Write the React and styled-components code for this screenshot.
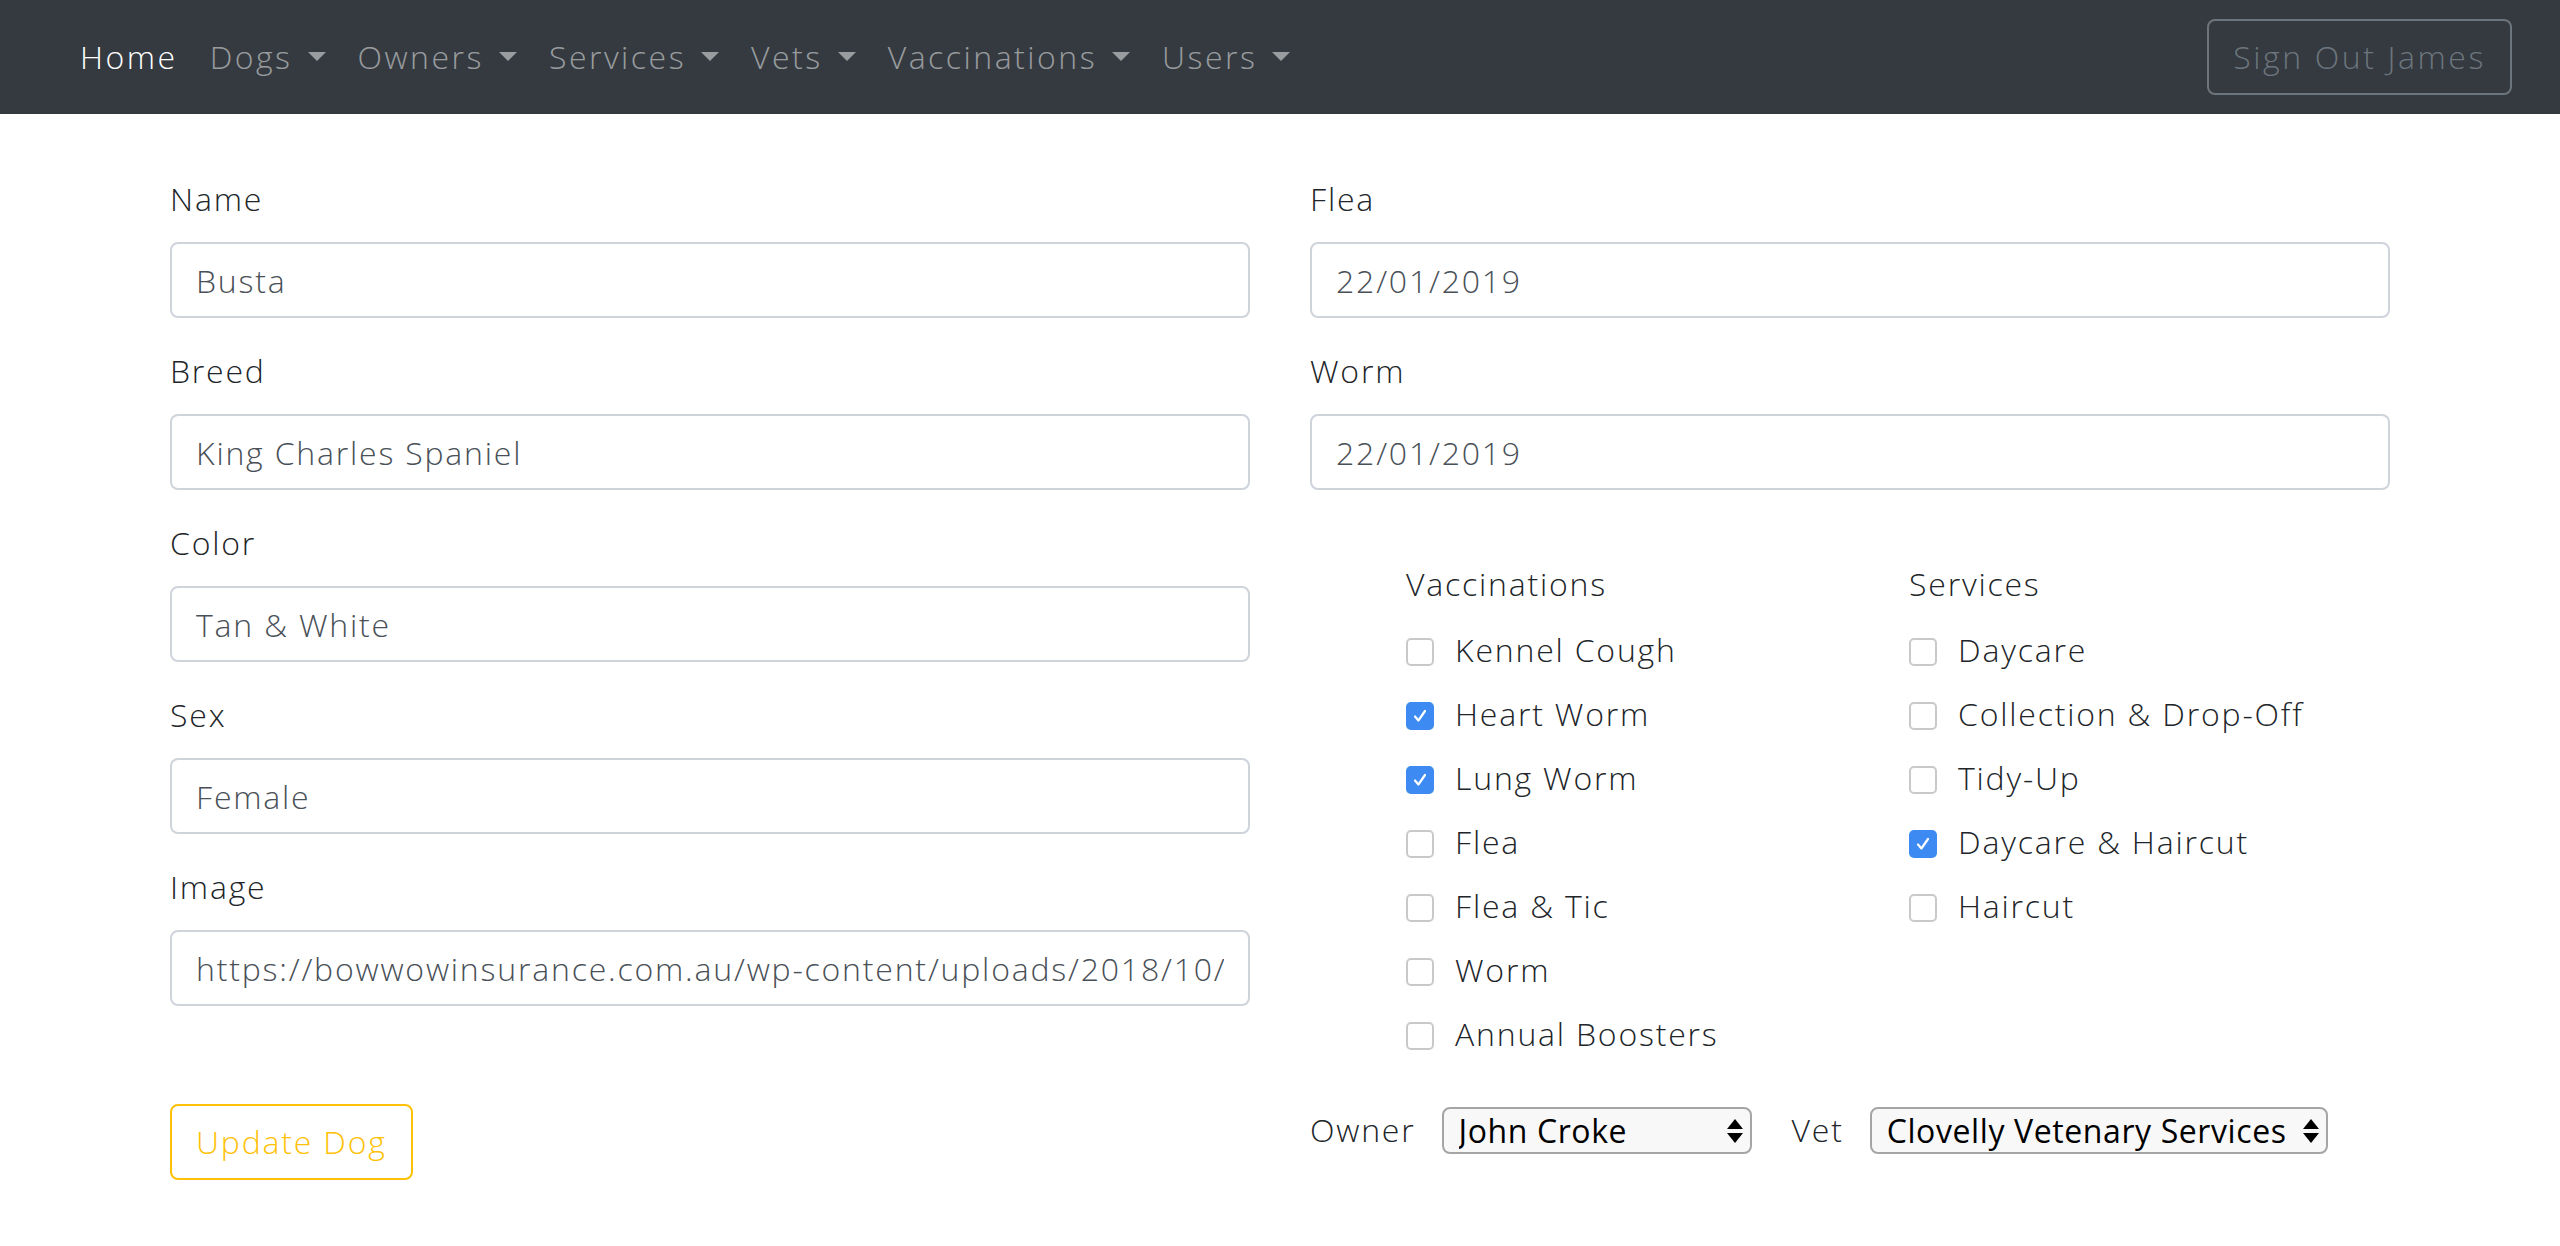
import React from 'react';
import styled, { createGlobalStyle } from 'styled-components';

const GlobalStyle = createGlobalStyle`
  body {
    margin: 0;
    background: #fff;
    font-family: "Open Sans", Inter, "Liberation Sans", sans-serif;
    font-weight: 300;
    font-size: 32px;
    line-height: 48px;
    letter-spacing: 1.8px;
    color: #212529;
  }
  * { box-sizing: border-box; }
`;

const Navbar = styled.nav`
  display: flex;
  align-items: center;
  justify-content: space-between;
  height: 114px;
  padding: 0 48px 0 64px;
  background: #343a40;
`;

const NavList = styled.ul`
  display: flex;
  margin: 0;
  padding: 0;
  list-style: none;
  letter-spacing: 2.5px;
`;

const NavLink = styled.li`
  padding: 0 16px;
  line-height: 48px;
  color: ${p => (p.active ? '#fff' : 'rgba(255, 255, 255, 0.5)')};
  white-space: nowrap;
`;

const Caret = styled.span`
  display: inline-block;
  margin-left: 15px;
  vertical-align: 8px;
  border-top: 9px solid;
  border-right: 9px solid transparent;
  border-left: 9px solid transparent;
`;

const Button = styled.button`
  display: inline-block;
  padding: 12px 24px;
  font-family: inherit;
  font-weight: 300;
  font-size: 32px;
  line-height: 48px;
  letter-spacing: ${p => p.spacing || 1.8}px;
  color: ${p => p.color};
  background: transparent;
  border: 2px solid ${p => p.color};
  border-radius: 8px;
  cursor: pointer;
`;

const Container = styled.main`
  width: 2280px;
  margin: 0 auto;
  padding: 64px 30px 0;
`;

const Row = styled.div`
  display: grid;
  grid-template-columns: 1fr 1fr;
  column-gap: 60px;
`;

const Column = styled.div`
  display: flex;
  flex-direction: column;
  align-items: flex-start;
`;

const FormGroup = styled.div`
  width: 100%;
  margin-bottom: 32px;
`;

const Label = styled.label`
  display: block;
  margin-bottom: 16px;
  line-height: 42px;
  padding-bottom: 6px;
`;

const TextInput = styled.input`
  display: block;
  width: 100%;
  height: 76px;
  padding: 12px 24px;
  font-family: inherit;
  font-weight: 300;
  font-size: 32px;
  line-height: 48px;
  letter-spacing: inherit;
  color: #495057;
  background: #fff;
  border: 2px solid #ced4da;
  border-radius: 8px;
  outline: none;
`;

const SubmitWrap = styled.div`
  margin-top: 66px;
`;

const CheckGrid = styled.div`
  display: grid;
  grid-template-columns: 503px auto;
  margin-top: 39px;
  padding-left: 96px;
`;

const CheckColumn = styled.div`
  display: flex;
  flex-direction: column;
`;

const CheckHeading = styled.div`
  margin-bottom: 17px;
  line-height: 45px;
  padding-bottom: 3px;
`;

const CheckRow = styled.label`
  display: flex;
  align-items: center;
  gap: 21px;
  margin-bottom: 16px;
  white-space: nowrap;
`;

const Box = styled.span`
  display: inline-flex;
  align-items: center;
  justify-content: center;
  flex: none;
  width: 28px;
  height: 28px;
  margin-top: 4px;
  border-radius: 5px;
  background: ${p => (p.checked ? '#3d8af2' : '#fff')};
  border: ${p => (p.checked ? 'none' : '2px solid #c9c9c9')};
`;

const PickRow = styled.div`
  display: flex;
  align-items: center;
  margin-top: 32px;
`;

const PickLabel = styled.span`
  margin-right: 26px;
`;

const SelectWrap = styled.div`
  position: relative;
  width: ${p => p.width}px;
  margin-right: ${p => p.gap || 0}px;
`;

const Select = styled.select`
  appearance: none;
  display: block;
  width: 100%;
  height: 47px;
  padding: 0 26px 0 15px;
  font-family: inherit;
  font-weight: 400;
  font-size: 32px;
  letter-spacing: 0.6px;
  color: #000;
  background: #f8f8f8;
  border: 2px solid #a5a5a5;
  border-radius: 8px;
  outline: none;
`;

const Arrows = styled.svg`
  position: absolute;
  right: 8px;
  top: 11px;
  pointer-events: none;
`;

const vaccinations = [
  ['Kennel Cough', false],
  ['Heart Worm', true],
  ['Lung Worm', true],
  ['Flea', false],
  ['Flea & Tic', false],
  ['Worm', false],
  ['Annual Boosters', false],
];

const services = [
  ['Daycare', false],
  ['Collection & Drop-Off', false],
  ['Tidy-Up', false],
  ['Daycare & Haircut', true],
  ['Haircut', false],
];

const Check = ({ label, checked }) => (
  <CheckRow>
    <Box checked={checked}>
      {checked && (
        <svg width="18" height="18" viewBox="0 0 18 18">
          <path d="M4 9.5 L7.4 13.5 L14 4" fill="none" stroke="#fff" strokeWidth="2.2" strokeLinecap="round" strokeLinejoin="round" />
        </svg>
      )}
    </Box>
    {label}
  </CheckRow>
);

const Picker = ({ value, width, gap }) => (
  <SelectWrap width={width} gap={gap}>
    <Select defaultValue={value}>
      <option>{value}</option>
    </Select>
    <Arrows width="18" height="26" viewBox="0 0 18 26">
      <path d="M9 1 L17 11 L1 11 Z" fill="#000" />
      <path d="M1 15 L17 15 L9 25 Z" fill="#000" />
    </Arrows>
  </SelectWrap>
);

const Field = ({ label, value }) => (
  <FormGroup>
    <Label>{label}</Label>
    <TextInput defaultValue={value} />
  </FormGroup>
);

const App = () => (
  <>
    <GlobalStyle />
    <Navbar>
      <NavList>
        <NavLink active>Home</NavLink>
        {['Dogs', 'Owners', 'Services', 'Vets', 'Vaccinations', 'Users'].map(item => (
          <NavLink key={item}>
            {item}
            <Caret />
          </NavLink>
        ))}
      </NavList>
      <Button color="#6c757d" spacing={2.6}>Sign Out James</Button>
    </Navbar>
    <Container>
      <Row>
        <Column>
          <Field label="Name" value="Busta" />
          <Field label="Breed" value="King Charles Spaniel" />
          <Field label="Color" value="Tan & White" />
          <Field label="Sex" value="Female" />
          <Field label="Image" value="https://bowwowinsurance.com.au/wp-content/uploads/2018/10/cavalier-king-charles-spaniel.jpg" />
          <SubmitWrap>
            <Button color="#ffc107">Update Dog</Button>
          </SubmitWrap>
        </Column>
        <Column>
          <Field label="Flea" value="22/01/2019" />
          <Field label="Worm" value="22/01/2019" />
          <CheckGrid>
            <CheckColumn>
              <CheckHeading>Vaccinations</CheckHeading>
              {vaccinations.map(([label, checked]) => (
                <Check key={label} label={label} checked={checked} />
              ))}
            </CheckColumn>
            <CheckColumn>
              <CheckHeading>Services</CheckHeading>
              {services.map(([label, checked]) => (
                <Check key={label} label={label} checked={checked} />
              ))}
            </CheckColumn>
          </CheckGrid>
          <PickRow>
            <PickLabel>Owner</PickLabel>
            <Picker value="John Croke" width={310} gap={40} />
            <PickLabel>Vet</PickLabel>
            <Picker value="Clovelly Vetenary Services" width={458} />
          </PickRow>
        </Column>
      </Row>
    </Container>
  </>
);

export default App;
